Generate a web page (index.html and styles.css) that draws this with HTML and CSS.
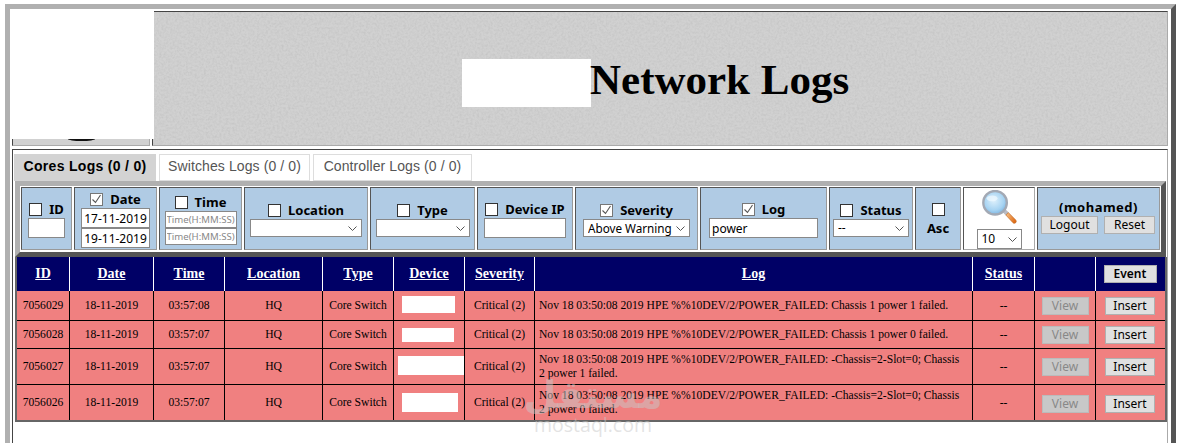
FILE: index.html
```html
<!DOCTYPE html>
<html lang="en">
<head>
<meta charset="utf-8">
<title>Network Logs</title>
<link rel="stylesheet" href="styles.css">
</head>
<body>
<div class="frame">
  <header class="banner">
    <div class="logo-cell"><span class="logo-arc"></span></div>
    <div class="title-cell">
      <svg class="noise" aria-hidden="true"><filter id="grain" color-interpolation-filters="sRGB"><feTurbulence type="fractalNoise" baseFrequency="0.45" numOctaves="2" seed="4"/><feColorMatrix values="0 0 0 0 0.76  0 0 0 0 0.76  0 0 0 0 0.76  1 1 0 0 -0.8"/></filter><rect width="100%" height="100%" filter="url(#grain)"/></svg>
      <h1 class="title"><span class="title-mask"></span>Network Logs</h1>
    </div>
    <div class="logo-mask"></div>
  </header>

  <main class="panel">
    <nav class="tabs">
      <a class="tab tab-active">Cores Logs (0 / 0)</a>
      <a class="tab">Switches Logs (0 / 0)</a>
      <a class="tab">Controller Logs (0 / 0)</a>
    </nav>

    <form class="filters">
      <div class="fcell f-id">
        <label class="flabel"><input type="checkbox"> ID</label>
        <input class="field w-id" type="text">
      </div>
      <div class="fcell f-date">
        <label class="flabel"><input type="checkbox" checked> Date</label>
        <input class="field w-date" type="text" value="17-11-2019">
        <input class="field w-date" type="text" value="19-11-2019">
      </div>
      <div class="fcell f-time">
        <label class="flabel"><input type="checkbox"> Time</label>
        <input class="field w-time" type="text" placeholder="Time(H:MM:SS)">
        <input class="field w-time" type="text" placeholder="Time(H:MM:SS)">
      </div>
      <div class="fcell f-loc">
        <label class="flabel"><input type="checkbox"> Location</label>
        <select class="pick w-loc"><option></option></select>
      </div>
      <div class="fcell f-type">
        <label class="flabel"><input type="checkbox"> Type</label>
        <select class="pick w-type"><option></option></select>
      </div>
      <div class="fcell f-ip">
        <label class="flabel"><input type="checkbox"> Device IP</label>
        <input class="field w-ip" type="text">
      </div>
      <div class="fcell f-sev">
        <label class="flabel"><input type="checkbox" checked> Severity</label>
        <select class="pick w-sev"><option>Above Warning</option></select>
      </div>
      <div class="fcell f-log">
        <label class="flabel"><input type="checkbox" checked> Log</label>
        <input class="field w-log" type="text" value="power">
      </div>
      <div class="fcell f-status">
        <label class="flabel"><input type="checkbox"> Status</label>
        <select class="pick w-status"><option>--</option></select>
      </div>
      <div class="fcell f-asc">
        <input type="checkbox">
        <span class="flabel">Asc</span>
      </div>
      <div class="fcell f-search">
        <svg class="lens" viewBox="0 0 36 36" width="36" height="36" aria-hidden="true">
          <defs>
            <radialGradient id="glass" cx="0.45" cy="0.4" r="0.65"><stop offset="0" stop-color="#dff1fc"/><stop offset="0.65" stop-color="#a6d3f2"/><stop offset="1" stop-color="#74aede"/></radialGradient>
            <linearGradient id="grip" x1="0" y1="0" x2="1" y2="0.4"><stop offset="0" stop-color="#f9c48a"/><stop offset="1" stop-color="#e0701c"/></linearGradient>
          </defs>
          <path d="M21 22l3-3 4 4-3 3z" fill="#b9bcc4"/>
          <path d="M25 25.500l2.500-2.500 7.500 7.500c.8 1 .8 2 0 2.800s-2 .8-2.800 0z" fill="url(#grip)" stroke="#b8601c" stroke-width=".6"/>
          <circle cx="14" cy="13" r="12" fill="url(#glass)" stroke="#a3a9b4" stroke-width="2.400"/>
          <ellipse cx="11" cy="8.500" rx="5.500" ry="3" fill="#eef8ff" opacity=".75"/>
        </svg>
        <select class="pick w-page"><option>10</option></select>
      </div>
      <div class="fcell f-user">
        <div class="user-name">(mohamed)</div>
        <div class="user-actions">
          <button class="btn btn-logout" type="button">Logout</button>
          <button class="btn btn-reset" type="button">Reset</button>
        </div>
      </div>
    </form>

    <div class="table-wrap">
      <table class="logs">
        <colgroup>
          <col class="c1"><col class="c2"><col class="c3"><col class="c4"><col class="c5"><col class="c6"><col class="c7"><col class="c8"><col class="c9"><col class="c10"><col class="c11">
        </colgroup>
        <thead>
          <tr>
            <th><a>ID</a></th><th><a>Date</a></th><th><a>Time</a></th><th><a>Location</a></th><th><a>Type</a></th><th><a>Device</a></th><th><a>Severity</a></th><th><a>Log</a></th><th><a>Status</a></th><th></th><th><button class="btn btn-event" type="button">Event</button></th>
          </tr>
        </thead>
        <tbody>
          <tr class="r1">
            <td>7056029</td><td>18-11-2019</td><td>03:57:08</td><td>HQ</td><td>Core Switch</td><td><span class="redact d1"></span></td><td>Critical (2)</td>
            <td class="msg">Nov 18 03:50:08 2019 HPE %%10DEV/2/POWER_FAILED: Chassis 1 power 1 failed.</td>
            <td>--</td><td><button class="btn btn-view" type="button" disabled>View</button></td><td><button class="btn btn-ins" type="button">Insert</button></td>
          </tr>
          <tr class="r2">
            <td>7056028</td><td>18-11-2019</td><td>03:57:07</td><td>HQ</td><td>Core Switch</td><td><span class="redact d2"></span></td><td>Critical (2)</td>
            <td class="msg">Nov 18 03:50:08 2019 HPE %%10DEV/2/POWER_FAILED: Chassis 1 power 0 failed.</td>
            <td>--</td><td><button class="btn btn-view" type="button" disabled>View</button></td><td><button class="btn btn-ins" type="button">Insert</button></td>
          </tr>
          <tr class="r3">
            <td>7056027</td><td>18-11-2019</td><td>03:57:07</td><td>HQ</td><td>Core Switch</td><td><span class="redact d3"></span></td><td>Critical (2)</td>
            <td class="msg">Nov 18 03:50:08 2019 HPE %%10DEV/2/POWER_FAILED: -Chassis=2-Slot=0; Chassis 2 power 1 failed.</td>
            <td>--</td><td><button class="btn btn-view" type="button" disabled>View</button></td><td><button class="btn btn-ins" type="button">Insert</button></td>
          </tr>
          <tr class="r4">
            <td>7056026</td><td>18-11-2019</td><td>03:57:07</td><td>HQ</td><td>Core Switch</td><td><span class="redact d4"></span></td><td>Critical (2)</td>
            <td class="msg">Nov 18 03:50:08 2019 HPE %%10DEV/2/POWER_FAILED: -Chassis=2-Slot=0; Chassis 2 power 0 failed.</td>
            <td>--</td><td><button class="btn btn-view" type="button" disabled>View</button></td><td><button class="btn btn-ins" type="button">Insert</button></td>
          </tr>
        </tbody>
      </table>
    </div>
  </main>
</div>
<div class="watermark"><span class="wm-ar" lang="ar" dir="rtl">مستقل</span><span class="wm-en">mostaql.com</span></div>
</body>
</html>
```

FILE: styles.css
```css
html, body { height: 100%; overflow: hidden; }
body { margin: 4px 8px 0 5px; background: #fff; font-family: "Liberation Serif", serif; position: relative; }

.frame {
  border: 5px solid;
  border-color: #b0b0b0 #555 #555 #b0b0b0;
  padding: 2px 3px 0 2px;
  height: 600px;
  box-sizing: border-box;
}

.banner { position: relative; display: flex; gap: 2px; height: 135px; }
.logo-cell, .title-cell {
  position: relative;
  box-sizing: border-box;
  height: 135px;
  background: #d1d1d1;
  border: 1px solid;
  border-color: #444 #aaa #aaa #444;
}
.logo-cell { width: 138px; flex: none; overflow: hidden; }
.logo-arc {
  position: absolute; left: 55px; top: 127px;
  width: 27px; height: 2px;
  border-radius: 0 0 50% 50% / 0 0 100% 100%; background: #111;
}
.logo-mask { position: absolute; left: -2px; top: -2px; width: 144px; height: 130px; background: #fff; }
.title-cell { flex: 1; display: flex; align-items: center; overflow: hidden; }
.noise { position: absolute; inset: 0; width: 100%; height: 100%; }
.title {
  position: relative;
  margin: 3px 0 0 309px;
  display: flex; align-items: center;
  font-size: 43px; font-weight: bold; line-height: 48px; color: #000; white-space: nowrap;
}
.title-mask { width: 129px; height: 48px; margin: 5px -1px 0 0; background: #fff; }

.panel {
  margin-top: 3px;
  box-sizing: border-box;
  height: 400px;
  border: 1px solid;
  border-color: #444 #aaa #aaa #444;
  padding: 4px 0 0 1px;
}

.tabs { display: flex; gap: 3px; height: 27px; font-family: "Liberation Sans", sans-serif; font-size: 14px; letter-spacing: .1px; }
.tab {
  box-sizing: border-box; height: 27px; padding: 0 0 4px;
  display: flex; align-items: center; justify-content: center; white-space: nowrap;
  border: 1px solid #ddd; color: #555; background: #fff;
}
.tab-active { width: 142px; background: #d3d3d3; border-color: #d3d3d3; color: #000; font-weight: bold; letter-spacing: .3px; }
.tab:nth-child(2) { width: 151px; }
.tab:nth-child(3) { width: 159px; }

.filters {
  box-sizing: border-box;
  margin: 0 0 0 1px;
  width: 1151px; height: 76px;
  display: flex; gap: 2px;
  padding: 1px;
  border: 5px solid;
  border-color: #b0b0b0 #555 #555 #b0b0b0;
  background: #fff;
}
.fcell {
  box-sizing: border-box; height: 63px; flex: none; padding-top: 2px;
  display: flex; flex-direction: column; align-items: center; justify-content: center;
  background: #b0cbe4;
  border: 1px solid;
  border-color: #555 #999 #999 #555;
}
.f-id { width: 51px; }
.f-date { width: 83px; }
.f-time { width: 83px; }
.f-loc { width: 124px; }
.f-type { width: 105px; }
.f-ip { width: 96px; }
.f-sev { width: 123px; }
.f-log { width: 127px; }
.f-status { width: 84px; }
.f-asc { width: 46px; }
.f-search { width: 72px; background: #fff; border-color: #555 #aaa #aaa #555; }
.f-user { width: 123px; padding: 0 0 4px; }

.flabel {
  display: flex; align-items: center; gap: 7px;
  font-family: "Noto Sans", sans-serif; font-size: 13px; font-weight: bold; color: #000; line-height: 16px; white-space: nowrap;
}

input[type="checkbox"] {
  appearance: none;
  width: 13px; height: 13px; margin: 0; flex: none;
  background: #fff; border: 1px solid #333; box-sizing: border-box;
}
input[type="checkbox"]:checked {
  border-color: #777;
  background: #fff url("data:image/svg+xml,%3Csvg xmlns='http://www.w3.org/2000/svg' width='11' height='11'%3E%3Cpath d='M1.500 5.500l3 3 5-7.500' fill='none' stroke='%23555' stroke-width='1.100'/%3E%3C/svg%3E") no-repeat center;
}

.field, .pick {
  box-sizing: border-box;
  background: #fff; border: 1px solid #888; border-radius: 0; margin: 0; color: #000;
  font-family: "Noto Sans", sans-serif; font-size: 12px;
}
.field { height: 20px; padding: 0 2px; outline: none; }
.pick {
  height: 18px; padding: 0 14px 0 4px; line-height: 16px;
  appearance: none;
  background: #fff url("data:image/svg+xml,%3Csvg xmlns='http://www.w3.org/2000/svg' width='9' height='5'%3E%3Cpath d='M.5.500l4 4 4-4' fill='none' stroke='%23555'/%3E%3C/svg%3E") no-repeat right 4px center;
}
.w-id { width: 37px; margin-top: 1px; }
.w-date { width: 69px; text-align: center; }
.w-time { width: 72px; height: 17px; padding: 0 1px; font-size: 9.6px; }
.w-time::placeholder { color: #888; }
.w-loc { width: 112px; margin-top: 1px; }
.w-type { width: 94px; margin-top: 1px; }
.w-ip { width: 82px; margin-top: 1px; }
.w-sev { width: 107px; margin-top: 1px; font-size: 11.7px; }
.w-log { width: 109px; margin-top: 1px; }
.w-status { width: 76px; margin-top: 1px; }
.w-page { width: 45px; height: 20px; margin-top: 4px; }

.f-date .flabel, .f-time .flabel { margin-bottom: 1px; }
.f-asc .flabel { margin-top: 4px; }

.lens { display: block; }

.user-name { font-family: "Noto Sans", sans-serif; font-size: 13px; font-weight: bold; letter-spacing: .5px; line-height: 16px; color: #000; }
.user-actions { display: flex; gap: 6px; margin: 1px 1px 0 0; }

.btn {
  box-sizing: border-box; height: 18px; padding: 0; margin: 0;
  font-family: "Noto Sans", sans-serif; font-size: 12px; line-height: 16px; color: #000;
  background: #e0e0e0; border: 1px solid #b0b0b0; border-radius: 0;
}
.btn-logout { width: 57px; }
.btn-reset { width: 51px; }
.btn-view { width: 47px; background: #c8c8c8; border-color: #bbb; color: #888; }
.btn-ins { width: 50px; }
.btn-event { width: 53px; font-weight: 600; font-size: 12px; }

.table-wrap {
  box-sizing: border-box; width: 1152px; margin-left: 1px;
  border: solid #666; border-width: 0 2px 2px;
}
.logs {
  width: 1148px; table-layout: fixed;
  border-collapse: separate; border-spacing: 0;
  font-size: 11.6px; line-height: 14px; color: #000; text-align: center;
}
.c1 { width: 53px; } .c2 { width: 84px; } .c3 { width: 71px; } .c4 { width: 98px; }
.c5 { width: 71px; } .c6 { width: 71px; } .c7 { width: 70px; } .c8 { width: 438px; }
.c9 { width: 62px; } .c10 { width: 61px; } .c11 { width: 69px; }

.logs th {
  height: 34px; box-sizing: border-box; padding: 0;
  background: #000066; color: #fff; font-size: 14px; font-weight: bold;
  border-right: 1px solid #fff;
}
.logs th a { text-decoration: underline; }
.logs th:last-child, .logs td:last-child { border-right: 0; padding-right: 1px; }
.logs td {
  box-sizing: border-box; padding: 0;
  background: #f08080;
  border-right: 1px solid #000; border-bottom: 1px solid #000;
}
.logs .r4 td { border-bottom: 0; }
.logs td.msg { text-align: left; padding: 0 10px 0 4px; }
.r1 td { height: 30px; }
.r2 td { height: 28px; }
.logs .r3 td { height: 36px; }
.logs .r4 td { height: 35px; }
.logs .r4 .btn { position: relative; top: 1px; }
.logs .btn { vertical-align: middle; }

.redact { display: inline-block; vertical-align: middle; background: #fff; }
.d1 { width: 53px; height: 17px; margin: 0 2px 2px 0; }
.d2 { width: 52px; height: 14px; margin: 0 2px 0 0; }
.d3 { width: 66px; height: 19px; margin: 0 0 2px 4px; }
.d4 { width: 56px; height: 19px; margin: 0 0 0 2px; }

.watermark {
  position: absolute; left: 522px; top: 371px; width: 132px;
  display: flex; flex-direction: column; align-items: center;
  color: rgba(200, 200, 200, .5); pointer-events: none;
}
.wm-ar { font-family: "DejaVu Sans", sans-serif; font-weight: bold; font-size: 38px; line-height: 40px; }
.wm-en { font-family: "Open Sans", sans-serif; font-size: 19.500px; line-height: 20px; }
```
